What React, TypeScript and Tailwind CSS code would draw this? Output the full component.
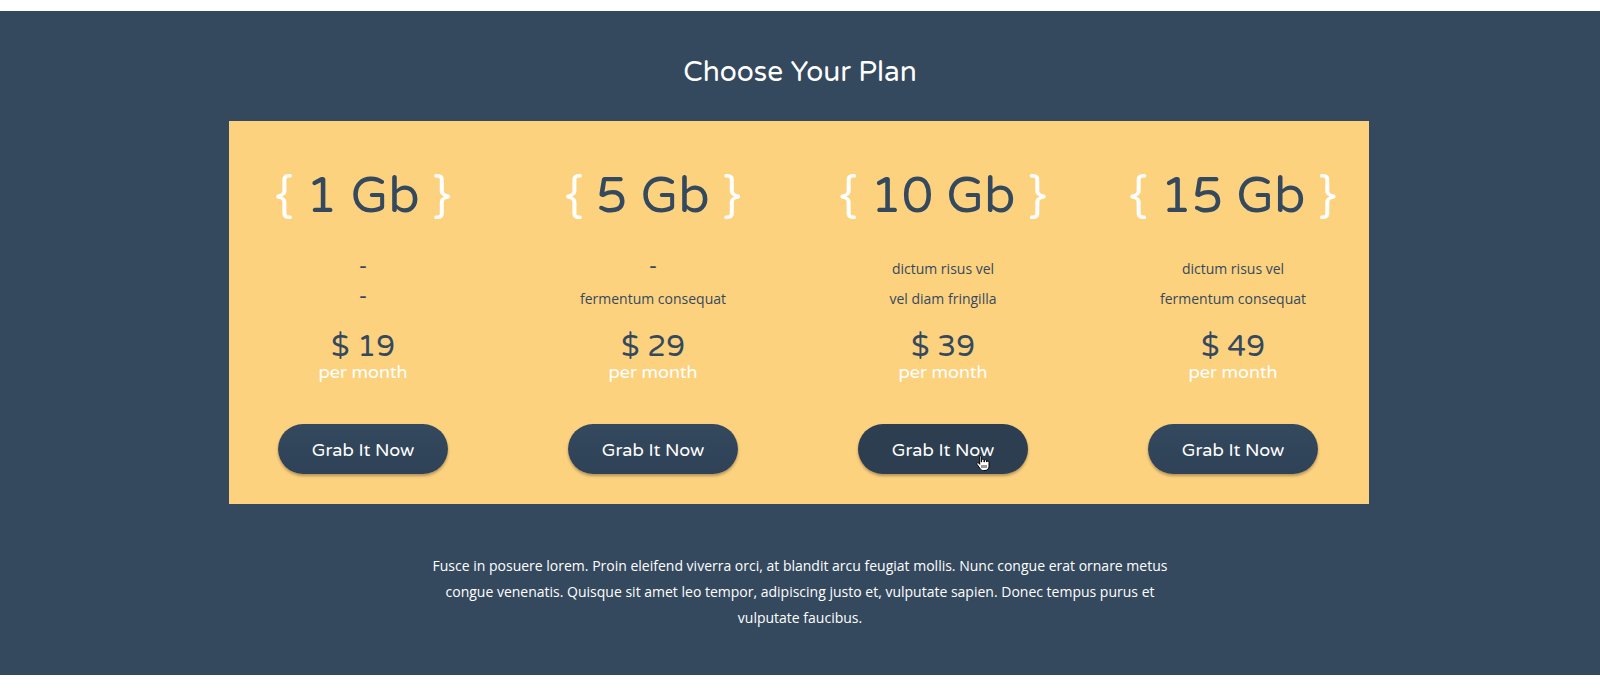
import React from "react";

const plans = [
  { size: "1 Gb", lines: ["-", "-"], price: "$ 19", hover: false },
  { size: "5 Gb", lines: ["-", "fermentum consequat"], price: "$ 29", hover: false },
  { size: "10 Gb", lines: ["dictum risus vel", "vel diam fringilla"], price: "$ 39", hover: true },
  { size: "15 Gb", lines: ["dictum risus vel", "fermentum consequat"], price: "$ 49", hover: false },
];

const round = { fontFamily: '"Varela Round", "Noto Sans", "Open Sans", sans-serif' };
const body = { fontFamily: '"Open Sans", "Noto Sans", sans-serif' };

function Cursor() {
  return (
    <svg className="absolute left-[118px] top-[30px]" width="14" height="17" viewBox="0 0 14 17">
      <path
        d="M4 1.5c.8 0 1.3.6 1.3 1.3V8h.3V6.3c0-.7.5-1.2 1.2-1.2s1.2.5 1.2 1.2V8h.3V7c0-.7.5-1.2 1.2-1.2s1.2.5 1.2 1.2v1h.2c0-.6.5-1 1-1s1.1.5 1.1 1.1v4.2c0 2.3-1.6 4.2-4 4.2H7.3c-1.4 0-2.3-.6-3-1.6L1 10.4c-.4-.6-.2-1.3.4-1.6.5-.3 1.1-.1 1.4.3l.9 1.2V2.8c0-.7.1-1.3.3-1.3z"
        fill="#fff"
        stroke="#000"
        strokeWidth="1"
      />
      <path d="M6 11v3M8 11v3M10 11v3" stroke="#000" strokeWidth="0.8" />
    </svg>
  );
}

export default function App() {
  return (
    <div className="w-[1600px] h-[690px] bg-white pt-[11px]">
      <section className="bg-[#34495e] h-[664px] flex flex-col items-center pt-[41px]">
        <h2 style={round} className="text-white text-[28px] leading-[40px] font-normal">
          Choose Your Plan
        </h2>
        <div className="mt-[29px] ml-[-2px] w-[1140px] h-[383px] bg-[#fdd27f] pt-[50px]">
          <div className="grid grid-cols-4 ml-[-11px] w-[1160px]">
            {plans.map((p) => (
              <div key={p.size} className="flex flex-col items-center">
                <div style={round} className="text-[50px] leading-[50px] text-[#34495e] whitespace-nowrap">
                  <span className="text-white">{"{"}</span> {p.size} <span className="text-white">{"}"}</span>
                </div>
                <div style={body} className="mt-[33px] flex flex-col items-center text-[#34495e]">
                  {p.lines.map((l, i) =>
                    l === "-" ? (
                      <div key={i} style={round} className="h-[30px] leading-[26px] text-[22px]">-</div>
                    ) : (
                      <div key={i} className="h-[30px] leading-[30px] text-[14px]">{l}</div>
                    )
                  )}
                </div>
                <div style={round} className="mt-[18px] text-[30px] leading-[30px] text-[#34495e]">
                  {p.price}
                </div>
                <div style={round} className="text-[18px] leading-[21px] text-white">per month</div>
                <div className="relative mt-[41px]">
                  <button
                    style={round}
                    className={
                      p.hover
                        ? "w-[170px] h-[50px] rounded-full text-white text-[18px] pt-[2px] bg-[#2c3e50] shadow-[0_2px_3px_rgba(0,0,0,0.3)]"
                        : "w-[170px] h-[50px] rounded-full text-white text-[18px] pt-[2px] bg-gradient-to-b from-[#34495e] to-[#2f4257] shadow-[0_2px_3px_rgba(0,0,0,0.3)]"
                    }
                  >
                    Grab It Now
                  </button>
                  {p.hover && <Cursor />}
                </div>
              </div>
            ))}
          </div>
        </div>
        <p style={body} className="mt-[49px] w-[760px] text-center text-white text-[14px] leading-[26px]">
          Fusce in posuere lorem. Proin eleifend viverra orci, at blandit arcu feugiat mollis. Nunc congue erat ornare metus
          congue venenatis. Quisque sit amet leo tempor, adipiscing justo et, vulputate sapien. Donec tempus purus et
          vulputate faucibus.
        </p>
      </section>
    </div>
  );
}
